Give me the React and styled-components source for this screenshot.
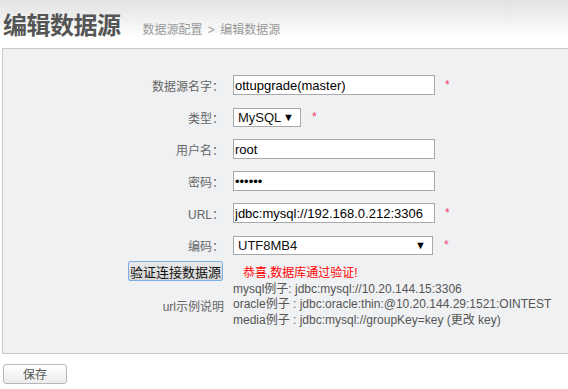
import React from "react";
import styled, { createGlobalStyle } from "styled-components";

const FONT = `"Liberation Sans", Arial, "Noto Sans CJK SC", sans-serif`;

const GlobalStyle = createGlobalStyle`
  html, body { margin: 0; padding: 0; background: #fff; }
  body { font-family: ${FONT}; font-size: 12px; color: #555; }
`;

const Header = styled.header`
  display: flex;
  align-items: baseline;
  height: 48px;
  box-sizing: border-box;
  padding: 10px 0 0 3px;
  background: linear-gradient(to bottom, #e2e2e2 0px, #f4f4f4 24px, #ffffff 38px, #ffffff 48px);
`;

const Title = styled.h1`
  margin: 0;
  font-family: "Noto Sans CJK SC", sans-serif;
  font-size: 24px;
  line-height: 28px;
  font-weight: 700;
  color: #555;
  letter-spacing: -0.5px;
`;

const Crumb = styled.span`
  margin-left: 22px;
  font-family: ${FONT};
  font-size: 12px;
  color: #999;
  word-spacing: 2px;
`;

const Panel = styled.section`
  margin-left: 2px;
  border: 1px solid #c8c8c8;
  border-right: none;
  background: #f0f1f3;
  padding: 20px 0 24px;
`;

const Row = styled.div`
  display: flex;
  align-items: center;
  height: ${(p) => p.$h || 32}px;
`;

const Label = styled.div`
  width: 221px;
  flex: none;
  text-align: right;
  font-size: 12px;
  color: #666;
  margin-right: 9px;
`;

const TextInput = styled.input`
  box-sizing: border-box;
  width: 202px;
  height: 20px;
  border: 1px solid #a9a9a9;
  background: #fff;
  padding: 0 1px;
  margin: 0;
  font-family: ${FONT};
  font-size: 13px;
  color: #000;
  outline: none;
`;

const SelectBox = styled.div`
  box-sizing: border-box;
  width: ${(p) => p.$w}px;
  height: 19px;
  border: 1px solid #a9a9a9;
  background: #fff;
  display: flex;
  align-items: center;
  justify-content: space-between;
  padding: 0 6px 0 4px;
  font-size: 13px;
  color: #111;
`;

const Arrow = styled.span`
  font-size: 11px;
  color: #000;
  line-height: 1;
`;

const Star = styled.span`
  margin-left: ${(p) => p.$ml || 11}px;
  color: #f0406a;
  font-size: 12px;
`;

const ActionCell = styled.div`
  width: 221px;
  flex: none;
  display: flex;
  justify-content: flex-end;
  margin-right: 19px;
`;

const VerifyButton = styled.button`
  box-sizing: border-box;
  height: 20px;
  padding: 0 1px;
  margin: 0 1px 0 0;
  border: 1px solid #7eaee6;
  border-radius: 2px;
  background: linear-gradient(to bottom, #e8e8e8, #d8d8d8);
  font-family: "Noto Sans CJK SC", sans-serif;
  font-size: 13px;
  line-height: 17px;
  color: #111;
  cursor: pointer;
`;

const Success = styled.span`
  color: #f00;
  font-size: 12px;
`;

const Examples = styled.div`
  display: flex;
  flex-direction: column;
  font-size: 12px;
  line-height: 15.5px;
  color: #555;
`;

const Footer = styled.div`
  padding: 10px 0 0 3px;
`;

const SaveButton = styled.button`
  box-sizing: border-box;
  width: 64px;
  height: 20px;
  border: 1px solid #b8b8b8;
  border-radius: 3px;
  background: linear-gradient(to bottom, #ffffff, #ececec);
  font-family: "Noto Sans CJK SC", sans-serif;
  font-size: 12px;
  line-height: 18px;
  color: #555;
  padding: 0;
  cursor: pointer;
`;

export default function App() {
  return (
    <>
      <GlobalStyle />
      <Header>
        <Title>编辑数据源</Title>
        <Crumb>数据源配置 &gt; 编辑数据源</Crumb>
      </Header>
      <Panel>
        <Row>
          <Label>数据源名字：</Label>
          <TextInput defaultValue="ottupgrade(master)" />
          <Star $ml={10}>*</Star>
        </Row>
        <Row>
          <Label>类型：</Label>
          <SelectBox $w={68}>
            <span>MySQL</span>
            <Arrow>▼</Arrow>
          </SelectBox>
          <Star>*</Star>
        </Row>
        <Row>
          <Label>用户名：</Label>
          <TextInput defaultValue="root" />
        </Row>
        <Row>
          <Label>密码：</Label>
          <TextInput type="password" defaultValue="123456" />
        </Row>
        <Row>
          <Label>URL：</Label>
          <TextInput defaultValue="jdbc:mysql://192.168.0.212:3306" />
          <Star $ml={10}>*</Star>
        </Row>
        <Row>
          <Label>编码：</Label>
          <SelectBox $w={200}>
            <span>UTF8MB4</span>
            <Arrow>▼</Arrow>
          </SelectBox>
          <Star>*</Star>
        </Row>
        <Row $h={20}>
          <ActionCell>
            <VerifyButton>验证连接数据源</VerifyButton>
          </ActionCell>
          <Success>恭喜,数据库通过验证!</Success>
        </Row>
        <Row $h={48}>
          <Label>url示例说明</Label>
          <Examples>
            <span>mysql例子: jdbc:mysql://10.20.144.15:3306</span>
            <span>oracle例子 : jdbc:oracle:thin:@10.20.144.29:1521:OINTEST</span>
            <span>media例子 : jdbc:mysql://groupKey=key (更改 key)</span>
          </Examples>
        </Row>
      </Panel>
      <Footer>
        <SaveButton>保存</SaveButton>
      </Footer>
    </>
  );
}
